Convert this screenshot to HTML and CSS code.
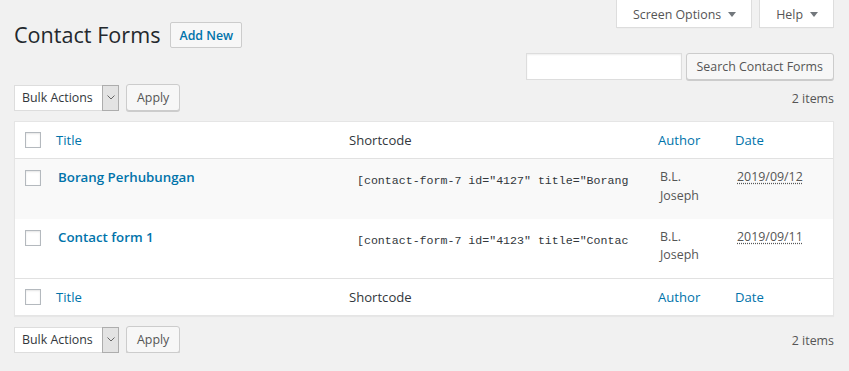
FILE: index.html
```html
<!DOCTYPE html>
<html lang="en">
<head>
<meta charset="utf-8">
<title>Contact Forms</title>
<link rel="stylesheet" href="styles.css">
</head>
<body>
<div class="wrap">
  <div class="top">
    <div class="title-row">
      <h1 class="page-title">Contact Forms</h1>
      <a class="page-action" href="#">Add New</a>
    </div>
    <div class="meta-links">
      <div class="meta-tab">Screen Options <svg class="tri" width="8" height="5" viewBox="0 0 8 5"><path d="M0 0H8L4 5Z"/></svg></div>
      <div class="meta-tab">Help <svg class="tri" width="8" height="5" viewBox="0 0 8 5"><path d="M0 0H8L4 5Z"/></svg></div>
    </div>
  </div>

  <div class="search-row">
    <div class="search-input"></div>
    <div class="button">Search Contact Forms</div>
  </div>

  <div class="tablenav">
    <div class="select">
      <span class="select-label">Bulk Actions</span>
      <span class="select-arrow"><svg width="8" height="5" viewBox="0 0 8 5"><path d="M0.5 0.5L4 4L7.5 0.5" fill="none" stroke="#666" stroke-width="1"/></svg></span>
    </div>
    <div class="button">Apply</div>
    <div class="count">2 items</div>
  </div>

  <table class="list">
    <colgroup>
      <col class="c-check"><col class="c-title"><col class="c-short"><col class="c-author"><col>
    </colgroup>
    <thead>
      <tr>
        <th class="check"><input type="checkbox" class="cb"></th>
        <th class="link">Title</th>
        <th>Shortcode</th>
        <th class="link">Author</th>
        <th class="link">Date</th>
      </tr>
    </thead>
    <tbody>
      <tr class="alt">
        <td class="check"><input type="checkbox" class="cb"></td>
        <td><a class="row-title" href="#">Borang Perhubungan</a></td>
        <td><div class="shortcode">[contact-form-7 id="4127" title="Borang</div></td>
        <td class="meta">B.L. Joseph</td>
        <td class="meta"><span class="date">2019/09/12</span></td>
      </tr>
      <tr>
        <td class="check"><input type="checkbox" class="cb"></td>
        <td><a class="row-title" href="#">Contact form 1</a></td>
        <td><div class="shortcode">[contact-form-7 id="4123" title="Contac</div></td>
        <td class="meta">B.L. Joseph</td>
        <td class="meta"><span class="date">2019/09/11</span></td>
      </tr>
    </tbody>
    <tfoot>
      <tr>
        <th class="check"><input type="checkbox" class="cb"></th>
        <th class="link">Title</th>
        <th>Shortcode</th>
        <th class="link">Author</th>
        <th class="link">Date</th>
      </tr>
    </tfoot>
  </table>

  <div class="tablenav bottom">
    <div class="select">
      <span class="select-label">Bulk Actions</span>
      <span class="select-arrow"><svg width="8" height="5" viewBox="0 0 8 5"><path d="M0.5 0.5L4 4L7.5 0.5" fill="none" stroke="#666" stroke-width="1"/></svg></span>
    </div>
    <div class="button">Apply</div>
    <div class="count">2 items</div>
  </div>
</div>
</body>
</html>
```

FILE: styles.css
```css
html, body {
  margin: 0;
  background: #f1f1f1;
}
body {
  font-family: "Open Sans", "Noto Sans", sans-serif;
  font-size: 12.4px;
  color: #444;
}
.wrap {
  padding: 0 15px 0 14px;
}
.top {
  display: flex;
  justify-content: space-between;
  align-items: flex-start;
  height: 48px;
}
.title-row {
  margin-top: 22px;
  display: flex;
  align-items: center;
  gap: 10px;
  height: 26px;
}
.page-title {
  margin: 0;
  font-size: 21.6px;
  font-weight: 400;
  line-height: 26px;
  color: #23282d;
}
.page-action {
  height: 26px;
  box-sizing: border-box;
  padding: 0 8px;
  border: 1px solid #ccc;
  border-radius: 2px;
  background: #f7f7f7;
  color: #0073aa;
  font-weight: 600;
  display: flex;
  align-items: center;
  text-decoration: none;
}
.meta-links {
  display: flex;
  gap: 7px;
}
.meta-tab {
  display: flex;
  align-items: center;
  gap: 7px;
  height: 28px;
  box-sizing: border-box;
  padding: 2px 15px 0 16px;
  background: #fff;
  border: 1px solid #ddd;
  border-top: 0;
  color: #555;
  box-shadow: 0 1px 1px -1px rgba(0,0,0,.1);
}
.tri {
  fill: #72777c;
}
.search-row {
  display: flex;
  justify-content: flex-end;
  gap: 4px;
  margin-top: 5px;
}
.search-input {
  width: 156px;
  height: 27px;
  box-sizing: border-box;
  border: 1px solid #ddd;
  background: #fff;
  box-shadow: inset 0 1px 2px rgba(0,0,0,.07);
}
.button {
  height: 27px;
  box-sizing: border-box;
  padding: 0 10px;
  border: 1px solid #ccc;
  border-radius: 3px;
  background: #f7f7f7;
  box-shadow: 0 1px 0 #ccc;
  color: #555;
  display: flex;
  align-items: center;
}
.tablenav {
  display: flex;
  align-items: center;
  gap: 7px;
  height: 27px;
  margin-top: 4px;
}
.tablenav.bottom {
  margin-top: 10px;
}
.select {
  width: 105px;
  height: 26px;
  box-sizing: border-box;
  display: flex;
  background: #fff;
  border: 1px solid #ddd;
}
.select-label {
  flex: 1;
  display: flex;
  align-items: center;
  padding-left: 7px;
  color: #32373c;
}
.select-arrow {
  width: 17px;
  box-sizing: border-box;
  margin: -1px -1px -1px 0;
  background: #e3e3e3;
  border: 1px solid #adadad;
  display: flex;
  align-items: center;
  justify-content: center;
}
.count {
  margin-left: auto;
  color: #555;
  padding-top: 2px;
}
.list {
  width: 100%;
  margin-top: 10px;
  border-collapse: separate;
  border-spacing: 0;
  table-layout: fixed;
  background: #fff;
  border: 1px solid #e5e5e5;
  box-shadow: 0 1px 1px rgba(0,0,0,.04);
}
.c-check { width: 31px; }
.c-title { width: 293px; }
.c-short { width: 309px; }
.c-author { width: 77px; }
.list thead tr, .list tfoot tr {
  height: 37px;
}
.list tbody tr {
  height: 59.5px;
}
.list th {
  padding: 0 10px;
  text-align: left;
  font-weight: 400;
  font-size: 13.1px;
  color: #32373c;
  vertical-align: middle;
}
.list thead th {
  border-bottom: 1px solid #e1e1e1;
}
.list tfoot th {
  border-top: 1px solid #e1e1e1;
}
.list th.link {
  color: #0073aa;
}
.list th.check {
  padding: 0 0 0 10px;
}
.list td {
  padding: 9px 12px 0;
  vertical-align: top;
}
.list td.check {
  padding: 11px 0 0 10px;
}
.list tbody tr.alt {
  background: #f9f9f9;
}
.cb {
  appearance: none;
  -webkit-appearance: none;
  display: block;
  margin: 0;
  width: 16px;
  height: 16px;
  box-sizing: border-box;
  border: 1px solid #b4b9be;
  background: #fff;
  box-shadow: inset 0 1px 2px rgba(0,0,0,.1);
}
.row-title {
  font-weight: 600;
  font-size: 13.3px;
  line-height: 19.5px;
  color: #0073aa;
  text-decoration: none;
}
.shortcode {
  font-family: "Liberation Mono", monospace;
  font-size: 11.6px;
  line-height: 18px;
  padding: 4px 6px 0;
  color: #32373c;
  white-space: nowrap;
  overflow: hidden;
}
.list td.meta {
  color: #555;
  line-height: 18.6px;
}
.date {
  text-decoration: underline dotted;
  text-underline-offset: 2px;
}
```
